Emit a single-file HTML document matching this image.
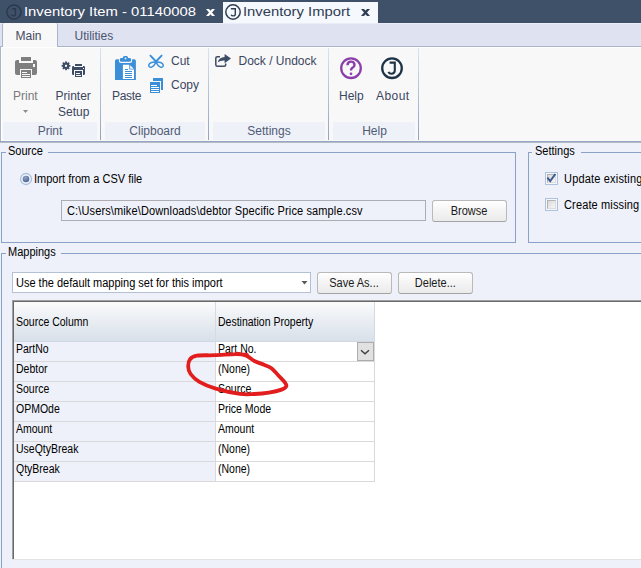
<!DOCTYPE html>
<html><head><meta charset="utf-8"><style>
html,body{margin:0;padding:0}
body{width:641px;height:568px;overflow:hidden;position:relative;font-family:"Liberation Sans", sans-serif;background:#eef1f9}
.t{position:absolute;white-space:nowrap;line-height:1}
.cb{position:absolute;width:13px;height:13px;box-sizing:border-box;border:1px solid #adc2df;background:#f4f6fa}
.cb div{position:absolute;left:1px;top:1px;width:9px;height:9px;box-sizing:border-box;border:1px solid;border-color:#b4b4b4 #dcdcdc #dcdcdc #b4b4b4;background:linear-gradient(135deg,#d9d9d9,#f7f7f7)}
</style></head><body>
<div style="position:absolute;left:0px;top:0px;width:641px;height:23px;background:#3f5069"></div>
<svg style="position:absolute;left:0;top:0" width="641" height="23"><circle cx="13.95" cy="12" r="7.1" fill="none" stroke="#2b394d" stroke-width="1.5"/><path d="M12 8.7 H15.4 V14 Q15.4 15.9 13.4 15.9 Q11.9 15.9 11.4 14.8" fill="none" stroke="#2b394d" stroke-width="1.4"/></svg>
<div class="t" style="left:23.8px;top:5px;font-size:13px;color:#fff;transform:scaleX(1.14);transform-origin:0 0">Inventory Item - 01140008</div>
<svg style="position:absolute;left:200px;top:4px" width="20" height="16"><path d="M6 5 H9 L15 12 H12 Z M12 5 H15 L9 12 H6 Z" fill="#fff"/></svg>
<div style="position:absolute;left:223px;top:2px;width:155px;height:21px;background:#f5f9fe"></div>
<svg style="position:absolute;left:223px;top:0" width="20" height="23"><circle cx="10" cy="12" r="7.2" fill="none" stroke="#2f3d52" stroke-width="1.5"/><path d="M7.9 8.7 H12.3 V14 Q12.3 15.9 10.2 15.9 Q8.6 15.9 8.1 14.8" fill="none" stroke="#2f3d52" stroke-width="1.4"/></svg>
<div class="t" style="left:242.8px;top:5px;font-size:13px;color:#2f3d52;transform:scaleX(1.14);transform-origin:0 0">Inventory Import</div>
<svg style="position:absolute;left:355px;top:4px" width="20" height="16"><path d="M6 5 H9 L15 12 H12 Z M12 5 H15 L9 12 H6 Z" fill="#2f3d52"/></svg>
<div style="position:absolute;left:0px;top:23px;width:641px;height:23px;background:#dfe3f1"></div>
<div style="position:absolute;left:0px;top:23px;width:641px;height:1px;background:#eaedf7"></div>
<div style="position:absolute;left:0px;top:46px;width:641px;height:1px;background:#a9b5c9"></div>
<div style="position:absolute;left:2px;top:23px;width:56px;height:24px;background:#f8f8f9;border-left:1px solid #a9b5c9;border-right:1px solid #a9b5c9;box-sizing:border-box;border-top-left-radius:2px;border-top-right-radius:2px"></div>
<div class="t" style="left:15.5px;top:30px;font-size:12px;color:#434b5f;">Main</div>
<div class="t" style="left:74.5px;top:30px;font-size:12px;color:#4a5370;">Utilities</div>
<div style="position:absolute;left:0px;top:47px;width:641px;height:95px;background:#f8f8f9"></div>
<div style="position:absolute;left:0px;top:47px;width:641px;height:1px;background:#ffffff"></div>
<div style="position:absolute;left:0px;top:47px;width:1px;height:95px;background:#a9b5c9"></div>
<div style="position:absolute;left:1px;top:47px;width:1px;height:94px;background:#ffffff"></div>
<div style="position:absolute;left:0px;top:141px;width:641px;height:1px;background:#93a6c3"></div>
<div style="position:absolute;left:0px;top:142px;width:641px;height:1px;background:#b6bbc4"></div>
<div style="position:absolute;left:3px;top:122px;width:94px;height:18px;background:#eef1f8"></div>
<div style="position:absolute;left:105px;top:122px;width:100px;height:18px;background:#eef1f8"></div>
<div style="position:absolute;left:213px;top:122px;width:112px;height:18px;background:#eef1f8"></div>
<div style="position:absolute;left:333px;top:122px;width:82px;height:18px;background:#eef1f8"></div>
<div style="position:absolute;left:100px;top:48px;width:1px;height:92px;background:linear-gradient(#dae4f2,#b5c4da 45%,#90a4c2)"></div>
<div style="position:absolute;left:208px;top:48px;width:1px;height:92px;background:linear-gradient(#dae4f2,#b5c4da 45%,#90a4c2)"></div>
<div style="position:absolute;left:328px;top:48px;width:1px;height:92px;background:linear-gradient(#dae4f2,#b5c4da 45%,#90a4c2)"></div>
<div style="position:absolute;left:418px;top:48px;width:1px;height:92px;background:linear-gradient(#dae4f2,#b5c4da 45%,#90a4c2)"></div>
<div class="t" style="left:-50.0px;width:200px;text-align:center;top:125px;font-size:12px;color:#505b77;">Print</div>
<div class="t" style="left:55.0px;width:200px;text-align:center;top:125px;font-size:12px;color:#505b77;">Clipboard</div>
<div class="t" style="left:169.0px;width:200px;text-align:center;top:125px;font-size:12px;color:#505b77;">Settings</div>
<div class="t" style="left:274.5px;width:200px;text-align:center;top:125px;font-size:12px;color:#505b77;">Help</div>
<svg style="position:absolute;left:0;top:47px" width="641" height="75" viewBox="0 47 641 75"><rect x="15" y="60" width="22" height="15" rx="2" fill="#7f7f7f"/><rect x="19" y="56" width="14" height="7" fill="#f8f8f9"/><rect x="21" y="57" width="10" height="4" fill="#7f7f7f"/><rect x="33" y="64" width="2" height="3" fill="#f8f8f9"/><rect x="20" y="69" width="12" height="10" fill="#f8f8f9"/><rect x="21" y="70" width="10" height="8" fill="#7f7f7f"/><rect x="22" y="72" width="5" height="1" fill="#f8f8f9"/><rect x="22" y="74" width="8" height="1" fill="#f8f8f9"/><rect x="22" y="76" width="8" height="1" fill="#f8f8f9"/><path d="M23 110 L28 110 L25.5 113 Z" fill="#8a8a8a"/><g fill="#3d4d66"><circle cx="66" cy="65.8" r="3.3"/><rect x="65.1" y="61.4" width="1.8" height="2" transform="rotate(0 66 65.8)"/><rect x="65.1" y="61.4" width="1.8" height="2" transform="rotate(45 66 65.8)"/><rect x="65.1" y="61.4" width="1.8" height="2" transform="rotate(90 66 65.8)"/><rect x="65.1" y="61.4" width="1.8" height="2" transform="rotate(135 66 65.8)"/><rect x="65.1" y="61.4" width="1.8" height="2" transform="rotate(180 66 65.8)"/><rect x="65.1" y="61.4" width="1.8" height="2" transform="rotate(225 66 65.8)"/><rect x="65.1" y="61.4" width="1.8" height="2" transform="rotate(270 66 65.8)"/><rect x="65.1" y="61.4" width="1.8" height="2" transform="rotate(315 66 65.8)"/></g><rect x="65" y="64.8" width="2" height="2" fill="#f8f8f9"/><rect x="72" y="66" width="13" height="9" rx="1.2" fill="#3d4d66"/><rect x="74" y="63" width="9" height="4" fill="#f8f8f9"/><rect x="75" y="64" width="7" height="2" fill="#3d4d66"/><rect x="74" y="70" width="9" height="8" fill="#f8f8f9"/><rect x="75" y="71" width="7" height="6" fill="#3d4d66"/><rect x="76" y="73" width="4" height="1" fill="#f8f8f9"/><rect x="76" y="75" width="5" height="1" fill="#f8f8f9"/><rect x="83" y="68" width="1" height="1" fill="#f8f8f9"/><path d="M115 61 Q115 59.3 116.7 59.3 L134.2 59.3 Q135.9 59.3 135.9 61 L135.9 80 L115 80 Z" fill="#3b8fd8"/><rect x="118.9" y="56" width="13.2" height="6.9" rx="2" fill="#f8f8f9"/><rect x="119.9" y="57.9" width="11.1" height="3.8" rx="1.3" fill="#3b8fd8"/><rect x="122.9" y="56" width="5.1" height="3" rx="1.5" fill="#3b8fd8"/><circle cx="125.5" cy="58.4" r="0.9" fill="#f8f8f9"/><path d="M122.9 64.8 L129.3 64.8 L129.3 69.6 L134 69.6 L134 79 L122.9 79 Z" fill="#fff"/><path d="M130.2 65.3 L133.7 68.8 L130.2 68.8 Z" fill="#fff"/><rect x="125" y="69" width="3" height="1" fill="#3b8fd8"/><rect x="125" y="71" width="7" height="1" fill="#3b8fd8"/><rect x="125" y="73" width="7" height="1" fill="#3b8fd8"/><rect x="125" y="75" width="7" height="1" fill="#3b8fd8"/><rect x="125" y="77" width="7" height="1" fill="#3b8fd8"/><g fill="none" stroke="#3b8fd8" stroke-linecap="round" stroke-linejoin="round"><path d="M150.4 55.6 L156 61.5 M161.6 55.6 L156 61.5" stroke-width="1.9"/><path d="M156 62 C153 61.6 149.3 62.6 148.8 65 C148.4 66.9 150.1 67.6 151.6 67.1 C153.6 66.4 155 64.2 156 62 Z" stroke-width="1.5"/><path d="M156 62 C159 61.6 162.7 62.6 163.2 65 C163.6 66.9 161.9 67.6 160.4 67.1 C158.4 66.4 157 64.2 156 62 Z" stroke-width="1.5"/></g><rect x="153" y="78" width="10" height="12" fill="#3b8fd8"/><rect x="149" y="81" width="12" height="13" fill="#f8f8f9"/><rect x="150" y="82" width="10" height="11" fill="#3b8fd8"/><rect x="151" y="85" width="6" height="1" fill="#fff"/><rect x="151" y="87" width="8" height="1" fill="#fff"/><rect x="151" y="89" width="8" height="1" fill="#fff"/><rect x="151" y="91" width="8" height="1" fill="#fff"/><path d="M220 56.8 L217.3 56.8 Q215.8 56.8 215.8 58.3 L215.8 64.7 Q215.8 66.2 217.3 66.2 L224.2 66.2 Q225.7 66.2 225.7 64.7 L225.7 63.5" fill="none" stroke="#3d4d66" stroke-width="1.5"/><path d="M217.8 62.2 Q219 57.3 224.6 57 L224.6 54 L231 58.6 L224.6 63.2 L224.6 60.5 Q220.5 60.3 217.8 62.2 Z" fill="#3d4d66"/><circle cx="351" cy="68.2" r="9.8" fill="none" stroke="#8b3fa9" stroke-width="2.3"/><path d="M347.5 65.3 Q347.5 61.6 351 61.6 Q354.5 61.6 354.5 65 Q354.5 66.9 352.3 67.9 Q351 68.5 351 70.6" fill="none" stroke="#8b3fa9" stroke-width="2.4"/><circle cx="351" cy="73.8" r="1.35" fill="#8b3fa9"/><circle cx="392" cy="68.2" r="9.8" fill="none" stroke="#1f3346" stroke-width="2.3"/><path d="M389.6 62.6 L394.8 62.6 L394.8 70.6 Q394.8 73.7 391.5 73.7 Q389.2 73.7 388.4 71.8" fill="none" stroke="#1f3346" stroke-width="2.1"/></svg>
<div class="t" style="left:13px;top:90px;font-size:12px;color:#7a7a7a;">Print</div>
<div class="t" style="left:55.5px;top:90px;font-size:12px;color:#3b4660;">Printer</div>
<div class="t" style="left:58px;top:106px;font-size:12px;color:#3b4660;">Setup</div>
<div class="t" style="left:112px;top:90px;font-size:12px;color:#3b4660;letter-spacing:-0.3px">Paste</div>
<div class="t" style="left:171px;top:55px;font-size:12px;color:#3b4660;">Cut</div>
<div class="t" style="left:171px;top:79px;font-size:12px;color:#3b4660;">Copy</div>
<div class="t" style="left:238.5px;top:55px;font-size:12px;color:#3b4660;">Dock / Undock</div>
<div class="t" style="left:339px;top:90px;font-size:12px;color:#3b4660;">Help</div>
<div class="t" style="left:376px;top:90px;font-size:12px;color:#3b4660;letter-spacing:0.45px">About</div>
<div style="position:absolute;left:0px;top:143px;width:641px;height:425px;background:#eef1f9"></div>
<div style="position:absolute;left:1px;top:152px;width:515px;height:91px;box-sizing:border-box;border:1px solid #8aa2c5"></div>
<div style="position:absolute;left:6px;top:147px;width:42px;height:10px;background:#eef1f9"></div>
<div class="t" style="left:8px;top:145px;font-size:12px;color:#000;transform:scaleX(0.9167);transform-origin:0 0;">Source</div>
<svg style="position:absolute;left:19px;top:172px" width="14" height="14"><defs><radialGradient id="rg" cx="0.4" cy="0.3" r="0.7"><stop offset="0" stop-color="#8fa3c6"/><stop offset="1" stop-color="#4a6494"/></radialGradient></defs><circle cx="7" cy="7" r="5.5" fill="#f1f3f8" stroke="#a9c0de" stroke-width="1.3"/><circle cx="7" cy="7" r="3.3" fill="url(#rg)"/></svg>
<div class="t" style="left:34px;top:173px;font-size:12px;color:#000;transform:scaleX(0.9167);transform-origin:0 0;">Import from a CSV file</div>
<div style="position:absolute;left:61px;top:200px;width:365px;height:21px;box-sizing:border-box;border:1px solid #abadb3;background:#eef1f9"></div>
<div class="t" style="left:66.5px;top:205px;font-size:12px;color:#000;transform:scaleX(0.9167);transform-origin:0 0;letter-spacing:0.14px">C:\Users\mike\Downloads\debtor Specific Price sample.csv</div>
<div style="position:absolute;left:432px;top:200px;width:75px;height:22px;box-sizing:border-box;border:1px solid #b9b9b9;border-bottom-color:#a3a3a3;border-radius:3px;background:linear-gradient(#ffffff,#f4f4f4 50%,#ebebeb)"></div>
<div class="t" style="left:319.5px;width:300px;text-align:center;top:205px;font-size:12px;color:#1a1a1a;"><span style="display:inline-block;transform:scaleX(0.9167)">Browse</span></div>
<div style="position:absolute;left:528px;top:152px;width:140px;height:91px;box-sizing:border-box;border:1px solid #8aa2c5"></div>
<div style="position:absolute;left:532px;top:147px;width:49px;height:10px;background:#eef1f9"></div>
<div class="t" style="left:534.5px;top:145px;font-size:12px;color:#000;transform:scaleX(0.9167);transform-origin:0 0;">Settings</div>
<div class="cb" style="left:545px;top:172px"><div></div></div>
<svg style="position:absolute;left:545px;top:172px" width="13" height="13"><path d="M2.4 5.6 L5.2 9.2 L10.4 2" fill="none" stroke="#3f5b8d" stroke-width="2"/></svg>
<div class="t" style="left:564px;top:173px;font-size:12px;color:#000;transform:scaleX(0.9167);transform-origin:0 0;letter-spacing:0.2px">Update existing</div>
<div class="cb" style="left:545px;top:198px"><div></div></div>
<div class="t" style="left:564px;top:199px;font-size:12px;color:#000;transform:scaleX(0.9167);transform-origin:0 0;letter-spacing:0.15px">Create missing</div>
<div style="position:absolute;left:1px;top:253px;width:700px;height:400px;box-sizing:border-box;border:1px solid #8aa2c5"></div>
<div style="position:absolute;left:6px;top:247px;width:55px;height:10px;background:#eef1f9"></div>
<div class="t" style="left:8px;top:246px;font-size:12px;color:#000;transform:scaleX(0.9167);transform-origin:0 0;">Mappings</div>
<div style="position:absolute;left:12px;top:272px;width:299px;height:21px;box-sizing:border-box;border:1px solid #b4c0d4;background:#fff"></div>
<div class="t" style="left:16px;top:277px;font-size:12px;color:#000;transform:scaleX(0.9167);transform-origin:0 0;">Use the default mapping set for this import</div>
<svg style="position:absolute;left:301px;top:281px" width="7" height="4"><path d="M0.5 0 L6.5 0 L3.5 3.5 Z" fill="#5a5a5a"/></svg>
<div style="position:absolute;left:317px;top:272px;width:75px;height:22px;box-sizing:border-box;border:1px solid #b9b9b9;border-bottom-color:#a3a3a3;border-radius:3px;background:linear-gradient(#ffffff,#f4f4f4 50%,#ebebeb)"></div>
<div class="t" style="left:204.5px;width:300px;text-align:center;top:277px;font-size:12px;color:#1a1a1a;"><span style="display:inline-block;transform:scaleX(0.9167)">Save As...</span></div>
<div style="position:absolute;left:398px;top:272px;width:75px;height:22px;box-sizing:border-box;border:1px solid #b9b9b9;border-bottom-color:#a3a3a3;border-radius:3px;background:linear-gradient(#ffffff,#f4f4f4 50%,#ebebeb)"></div>
<div class="t" style="left:285.5px;width:300px;text-align:center;top:277px;font-size:12px;color:#1a1a1a;"><span style="display:inline-block;transform:scaleX(0.9167)">Delete...</span></div>
<div style="position:absolute;left:12px;top:300px;width:629px;height:260px;background:#fff"></div>
<div style="position:absolute;left:12px;top:300px;width:629px;height:1px;background:#a0a0a0"></div>
<div style="position:absolute;left:12px;top:301px;width:629px;height:1px;background:#696969"></div>
<div style="position:absolute;left:12px;top:300px;width:1px;height:260px;background:#a0a0a0"></div>
<div style="position:absolute;left:13px;top:301px;width:1px;height:259px;background:#696969"></div>
<div style="position:absolute;left:12px;top:559px;width:629px;height:1px;background:#e3e3e3"></div>
<div style="position:absolute;left:14px;top:302px;width:361px;height:39px;background:linear-gradient(#fbfcfd,#eef1f5 35%,#d8e0ea)"></div>
<div style="position:absolute;left:14px;top:341px;width:361px;height:1px;background:#cfd8e3"></div>
<div style="position:absolute;left:215px;top:302px;width:1px;height:40px;background:#d5dae3"></div>
<div style="position:absolute;left:374px;top:302px;width:1px;height:40px;background:#d5dae3"></div>
<div class="t" style="left:16px;top:316px;font-size:12px;color:#000;transform:scaleX(0.875);transform-origin:0 0">Source Column</div>
<div class="t" style="left:218px;top:316px;font-size:12px;color:#000;transform:scaleX(0.875);transform-origin:0 0">Destination Property</div>
<div style="position:absolute;left:14px;top:342px;width:201px;height:19px;background:#eef1f9"></div>
<div style="position:absolute;left:14px;top:361px;width:361px;height:1px;background:#d9d9d9"></div>
<div style="position:absolute;left:215px;top:342px;width:1px;height:20px;background:#d9d9d9"></div>
<div style="position:absolute;left:374px;top:342px;width:1px;height:20px;background:#d9d9d9"></div>
<div class="t" style="left:16px;top:343px;font-size:12px;color:#000;transform:scaleX(0.875);transform-origin:0 0">PartNo</div>
<div class="t" style="left:218px;top:343px;font-size:12px;color:#000;transform:scaleX(0.875);transform-origin:0 0">Part No.</div>
<div style="position:absolute;left:14px;top:362px;width:201px;height:19px;background:#eef1f9"></div>
<div style="position:absolute;left:14px;top:381px;width:361px;height:1px;background:#d9d9d9"></div>
<div style="position:absolute;left:215px;top:362px;width:1px;height:20px;background:#d9d9d9"></div>
<div style="position:absolute;left:374px;top:362px;width:1px;height:20px;background:#d9d9d9"></div>
<div class="t" style="left:16px;top:363px;font-size:12px;color:#000;transform:scaleX(0.875);transform-origin:0 0">Debtor</div>
<div class="t" style="left:218px;top:363px;font-size:12px;color:#000;transform:scaleX(0.875);transform-origin:0 0">(None)</div>
<div style="position:absolute;left:14px;top:382px;width:201px;height:19px;background:#eef1f9"></div>
<div style="position:absolute;left:14px;top:401px;width:361px;height:1px;background:#d9d9d9"></div>
<div style="position:absolute;left:215px;top:382px;width:1px;height:20px;background:#d9d9d9"></div>
<div style="position:absolute;left:374px;top:382px;width:1px;height:20px;background:#d9d9d9"></div>
<div class="t" style="left:16px;top:383px;font-size:12px;color:#000;transform:scaleX(0.875);transform-origin:0 0">Source</div>
<div class="t" style="left:218px;top:383px;font-size:12px;color:#000;transform:scaleX(0.875);transform-origin:0 0">Source</div>
<div style="position:absolute;left:14px;top:402px;width:201px;height:19px;background:#eef1f9"></div>
<div style="position:absolute;left:14px;top:421px;width:361px;height:1px;background:#d9d9d9"></div>
<div style="position:absolute;left:215px;top:402px;width:1px;height:20px;background:#d9d9d9"></div>
<div style="position:absolute;left:374px;top:402px;width:1px;height:20px;background:#d9d9d9"></div>
<div class="t" style="left:16px;top:403px;font-size:12px;color:#000;transform:scaleX(0.875);transform-origin:0 0">OPMOde</div>
<div class="t" style="left:218px;top:403px;font-size:12px;color:#000;transform:scaleX(0.875);transform-origin:0 0">Price Mode</div>
<div style="position:absolute;left:14px;top:422px;width:201px;height:19px;background:#eef1f9"></div>
<div style="position:absolute;left:14px;top:441px;width:361px;height:1px;background:#d9d9d9"></div>
<div style="position:absolute;left:215px;top:422px;width:1px;height:20px;background:#d9d9d9"></div>
<div style="position:absolute;left:374px;top:422px;width:1px;height:20px;background:#d9d9d9"></div>
<div class="t" style="left:16px;top:423px;font-size:12px;color:#000;transform:scaleX(0.875);transform-origin:0 0">Amount</div>
<div class="t" style="left:218px;top:423px;font-size:12px;color:#000;transform:scaleX(0.875);transform-origin:0 0">Amount</div>
<div style="position:absolute;left:14px;top:442px;width:201px;height:19px;background:#eef1f9"></div>
<div style="position:absolute;left:14px;top:461px;width:361px;height:1px;background:#d9d9d9"></div>
<div style="position:absolute;left:215px;top:442px;width:1px;height:20px;background:#d9d9d9"></div>
<div style="position:absolute;left:374px;top:442px;width:1px;height:20px;background:#d9d9d9"></div>
<div class="t" style="left:16px;top:443px;font-size:12px;color:#000;transform:scaleX(0.875);transform-origin:0 0">UseQtyBreak</div>
<div class="t" style="left:218px;top:443px;font-size:12px;color:#000;transform:scaleX(0.875);transform-origin:0 0">(None)</div>
<div style="position:absolute;left:14px;top:462px;width:201px;height:19px;background:#eef1f9"></div>
<div style="position:absolute;left:14px;top:481px;width:361px;height:1px;background:#d9d9d9"></div>
<div style="position:absolute;left:215px;top:462px;width:1px;height:20px;background:#d9d9d9"></div>
<div style="position:absolute;left:374px;top:462px;width:1px;height:20px;background:#d9d9d9"></div>
<div class="t" style="left:16px;top:463px;font-size:12px;color:#000;transform:scaleX(0.875);transform-origin:0 0">QtyBreak</div>
<div class="t" style="left:218px;top:463px;font-size:12px;color:#000;transform:scaleX(0.875);transform-origin:0 0">(None)</div>
<div style="position:absolute;left:357px;top:342px;width:17px;height:19px;box-sizing:border-box;border:1px solid #acacac;background:#e1e1e1"></div>
<svg style="position:absolute;left:357px;top:342px" width="17" height="19"><path d="M4 8.2 L8 11.8 L12 8.2" fill="none" stroke="#3c3c3c" stroke-width="1.3"/></svg>
<svg style="position:absolute;left:0;top:0" width="641" height="568"><path d="M247 354.8 C245.17 354.68 241.33 354.03 236 354.1 C230.67 354.17 221.50 354.95 215 355.2 C208.50 355.45 201.13 354.97 197 355.6 C192.87 356.23 191.67 357.18 190.2 359 C188.73 360.82 188.13 364.00 188.2 366.5 C188.27 369.00 188.73 371.45 190.6 374 C192.47 376.55 195.20 379.37 199.4 381.8 C203.60 384.23 209.03 386.58 215.8 388.6 C222.57 390.62 233.57 393.00 240 393.9 C246.43 394.80 249.58 394.22 254.4 394 C259.22 393.78 264.38 393.33 268.9 392.6 C273.42 391.87 278.60 390.67 281.5 389.6 C284.40 388.53 285.75 387.42 286.3 386.2 C286.85 384.98 286.08 384.03 284.8 382.3 C283.52 380.57 280.77 378.12 278.6 375.8 C276.43 373.48 274.23 370.23 271.8 368.4 C269.37 366.57 266.90 366.03 264 364.8 C261.10 363.57 257.32 362.50 254.4 361 C251.48 359.50 249.40 357.03 246.5 355.8 C243.60 354.57 238.58 353.97 237 353.6" fill="none" stroke="#e21d1d" stroke-width="3.8" stroke-linecap="round" stroke-linejoin="round"/></svg>
</body></html>
